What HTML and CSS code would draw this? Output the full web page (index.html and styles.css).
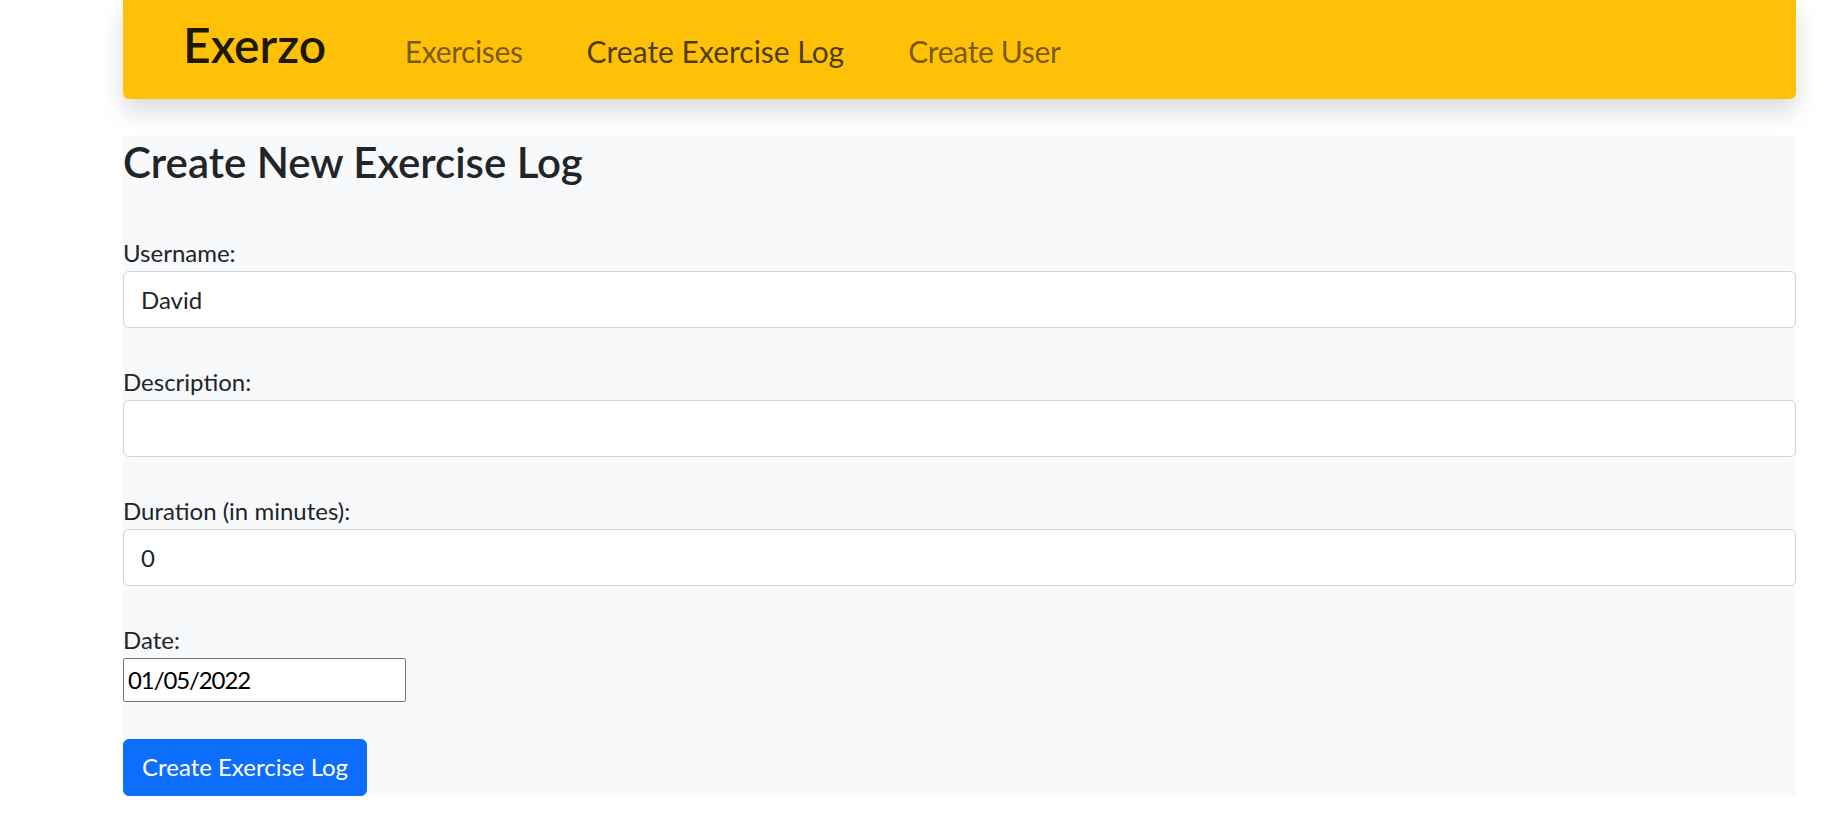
FILE: index.html
```html
<!DOCTYPE html>
<html lang="en">
<head>
<meta charset="utf-8">
<title>Exerzo</title>
<link rel="stylesheet" href="styles.css">
</head>
<body>
<div class="page">
  <nav class="navbar">
    <a class="brand" href="#">Exerzo</a>
    <ul class="nav">
      <li><a class="nav-link link-exercises" href="#">Exercises</a></li>
      <li><a class="nav-link active" href="#">Create Exercise Log</a></li>
      <li><a class="nav-link link-user" href="#">Create User</a></li>
    </ul>
  </nav>
  <main class="content">
    <h3 class="title">Create New Exercise Log</h3>
    <form class="form">
      <div class="form-group">
        <label class="label">Username: </label>
        <input class="form-control" type="text" value="David">
      </div>
      <div class="form-group">
        <label class="label">Description: </label>
        <input class="form-control" type="text" value="">
      </div>
      <div class="form-group">
        <label class="label">Duration (in minutes): </label>
        <input class="form-control" type="text" value="0">
      </div>
      <div class="form-group date-group">
        <label class="label">Date: </label>
        <input class="date-input" type="text" value="01/05/2022">
      </div>
      <button class="btn-primary" type="button">Create Exercise Log</button>
    </form>
  </main>
</div>
</body>
</html>
```
FILE: styles.css
```css
* { box-sizing: border-box; }

html, body {
  margin: 0;
  padding: 0;
  background: #ffffff;
}

body {
  font-family: Lato, "Open Sans", sans-serif;
  font-size: 24px;
  line-height: 36px;
  color: #212529;
}

.page {
  margin-left: 123px;
  width: 1673px;
}

/* ---------- navbar ---------- */
.navbar {
  display: flex;
  align-items: baseline;
  height: 99px;
  padding: 15.6px 0 0 60px;
  background: #ffc107;
  border-radius: 0 0 6px 6px;
  box-shadow: 0 12px 24px rgba(0, 0, 0, 0.15);
}

.brand {
  font-size: 48px;
  font-weight: 600;
  line-height: 57.6px;
  color: rgba(0, 0, 0, 0.9);
  text-decoration: none;
  margin-right: 78.7px;
}

.nav {
  display: flex;
  align-items: baseline;
  gap: 64px;
  list-style: none;
  margin: 0;
  padding: 0;
}

.nav-link {
  font-size: 30px;
  line-height: 45px;
  color: rgba(0, 0, 0, 0.55);
  text-decoration: none;
}

.link-exercises { letter-spacing: -0.37px; }
.link-user { letter-spacing: -0.35px; }

.nav-link.active {
  color: rgba(0, 0, 0, 0.7);
}

/* ---------- content ---------- */
.content {
  margin-top: 37px;
  background: #f8f9fa;
}

.title {
  margin: 0 0 46px;
  font-size: 42px;
  font-weight: 600;
  line-height: 52.8px;
  color: #212529;
}

.form {
  display: flex;
  flex-direction: column;
  align-items: flex-start;
}

.form-group {
  display: flex;
  flex-direction: column;
  align-items: stretch;
  align-self: stretch;
  margin-bottom: 36px;
}

.label {
  display: block;
  height: 36px;
  line-height: 36px;
}

.form-control {
  display: block;
  width: 100%;
  height: 57px;
  padding: 0 17px;
  font-family: inherit;
  font-size: 24px;
  line-height: 36px;
  color: #212529;
  background: #ffffff;
  border: 1px solid #ced4da;
  border-radius: 6px;
  outline: none;
}

.date-group {
  align-items: flex-start;
  margin-bottom: 37px;
}

.date-input {
  display: block;
  width: 283px;
  height: 44px;
  padding: 0 4px;
  font-family: inherit;
  font-size: 24px;
  line-height: 32px;
  letter-spacing: -1.1px;
  color: #000000;
  background: #ffffff;
  border: 1px solid #767676;
  border-radius: 2px;
  outline: none;
}

.btn-primary {
  display: block;
  height: 57px;
  padding: 0 18px;
  font-family: inherit;
  font-size: 24px;
  line-height: 36px;
  color: #ffffff;
  background: #0d6efd;
  border: 1px solid #0d6efd;
  border-radius: 6px;
  cursor: pointer;
}
```
